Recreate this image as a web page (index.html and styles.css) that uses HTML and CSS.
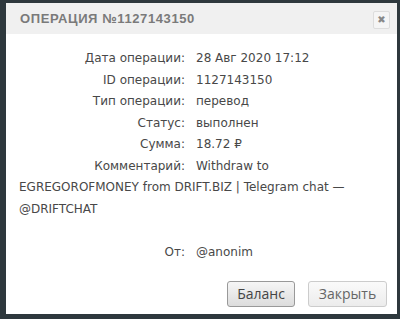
FILE: index.html
```html
<!DOCTYPE html>
<html>
<head>
<meta charset="utf-8">
<title>Операция</title>
<link rel="stylesheet" href="styles.css">
</head>
<body>
<div class="dialog">
	<div class="dlgHead">
		<span class="dlgTitle">ОПЕРАЦИЯ №1127143150</span>
		<span class="dlgClose">&#10006;</span>
	</div>
	<div class="dlgBody">
		<div class="row"><span class="lbl">Дата операции:</span><span class="val">28 Авг 2020 17:12</span></div>
		<div class="row"><span class="lbl">ID операции:</span><span class="val">1127143150</span></div>
		<div class="row"><span class="lbl">Тип операции:</span><span class="val">перевод</span></div>
		<div class="row"><span class="lbl">Статус:</span><span class="val">выполнен</span></div>
		<div class="row"><span class="lbl">Сумма:</span><span class="val">18.72 ₽</span></div>
		<div class="row"><span class="lbl">Комментарий:</span><span class="val">Withdraw to</span> <span>EGREGOROFMONEY from DRIFT.BIZ | Telegram chat —</span> <span>@DRIFTCHAT</span></div>
		<div class="row from"><span class="lbl">От:</span><span class="val">@anonim</span></div>
	</div>
	<div class="dlgFoot">
		<span class="btn">Баланс</span>
		<span class="btn light">Закрыть</span>
	</div>
</div>
</body>
</html>
```
FILE: styles.css
```css
html, body{
	margin:0;
	height:100%;
	background:#2e383d;
}
body{
	padding:3px 3px 5px 6px;
	box-sizing:border-box;
}
.dialog{
	background:#fff;
	height:100%;
	display:flex;
	flex-direction:column;
	font-family:"DejaVu Sans", sans-serif;
}
.dlgHead{
	background:#f0f0f0;
	height:31px;
	display:flex;
	align-items:center;
	justify-content:space-between;
	padding:0 7px 0 14px;
}
.dlgTitle{
	font-family:"Liberation Sans", sans-serif;
	font-size:13px;
	font-weight:bold;
	color:#7a7a7a;
	letter-spacing:0.6px;
}
.dlgClose{
	width:15px;
	height:16px;
	margin-top:2px;
	border:1px solid #ddd;
	border-radius:2px;
	background:#f5f5f5;
	color:#888;
	font-size:10px;
	display:flex;
	align-items:center;
	justify-content:center;
}
.dlgBody{
	flex:1;
	padding:14px 20px 0 13px;
	font-size:12px;
	color:#484848;
	line-height:21.5px;
}
.lbl{
	display:inline-block;
	width:166px;
	text-align:right;
	margin-right:11px;
}
.from{
	margin-top:21.5px;
}
.dlgFoot{
	display:flex;
	justify-content:flex-end;
	gap:13px;
	padding:0 10px 7px 0;
}
.btn{
	font-family:"Open Sans", sans-serif;
	font-size:14px;
	color:#444;
	width:66px;
	height:24px;
	line-height:24px;
	text-align:center;
	border:1px solid #999;
	border-radius:3px;
	background:linear-gradient(#f6f6f6,#dcdcdc);
}
.btn.light{
	width:77px;
	color:#666;
	border-color:#ccc;
	background:linear-gradient(#fafafa,#ececec);
}
```
